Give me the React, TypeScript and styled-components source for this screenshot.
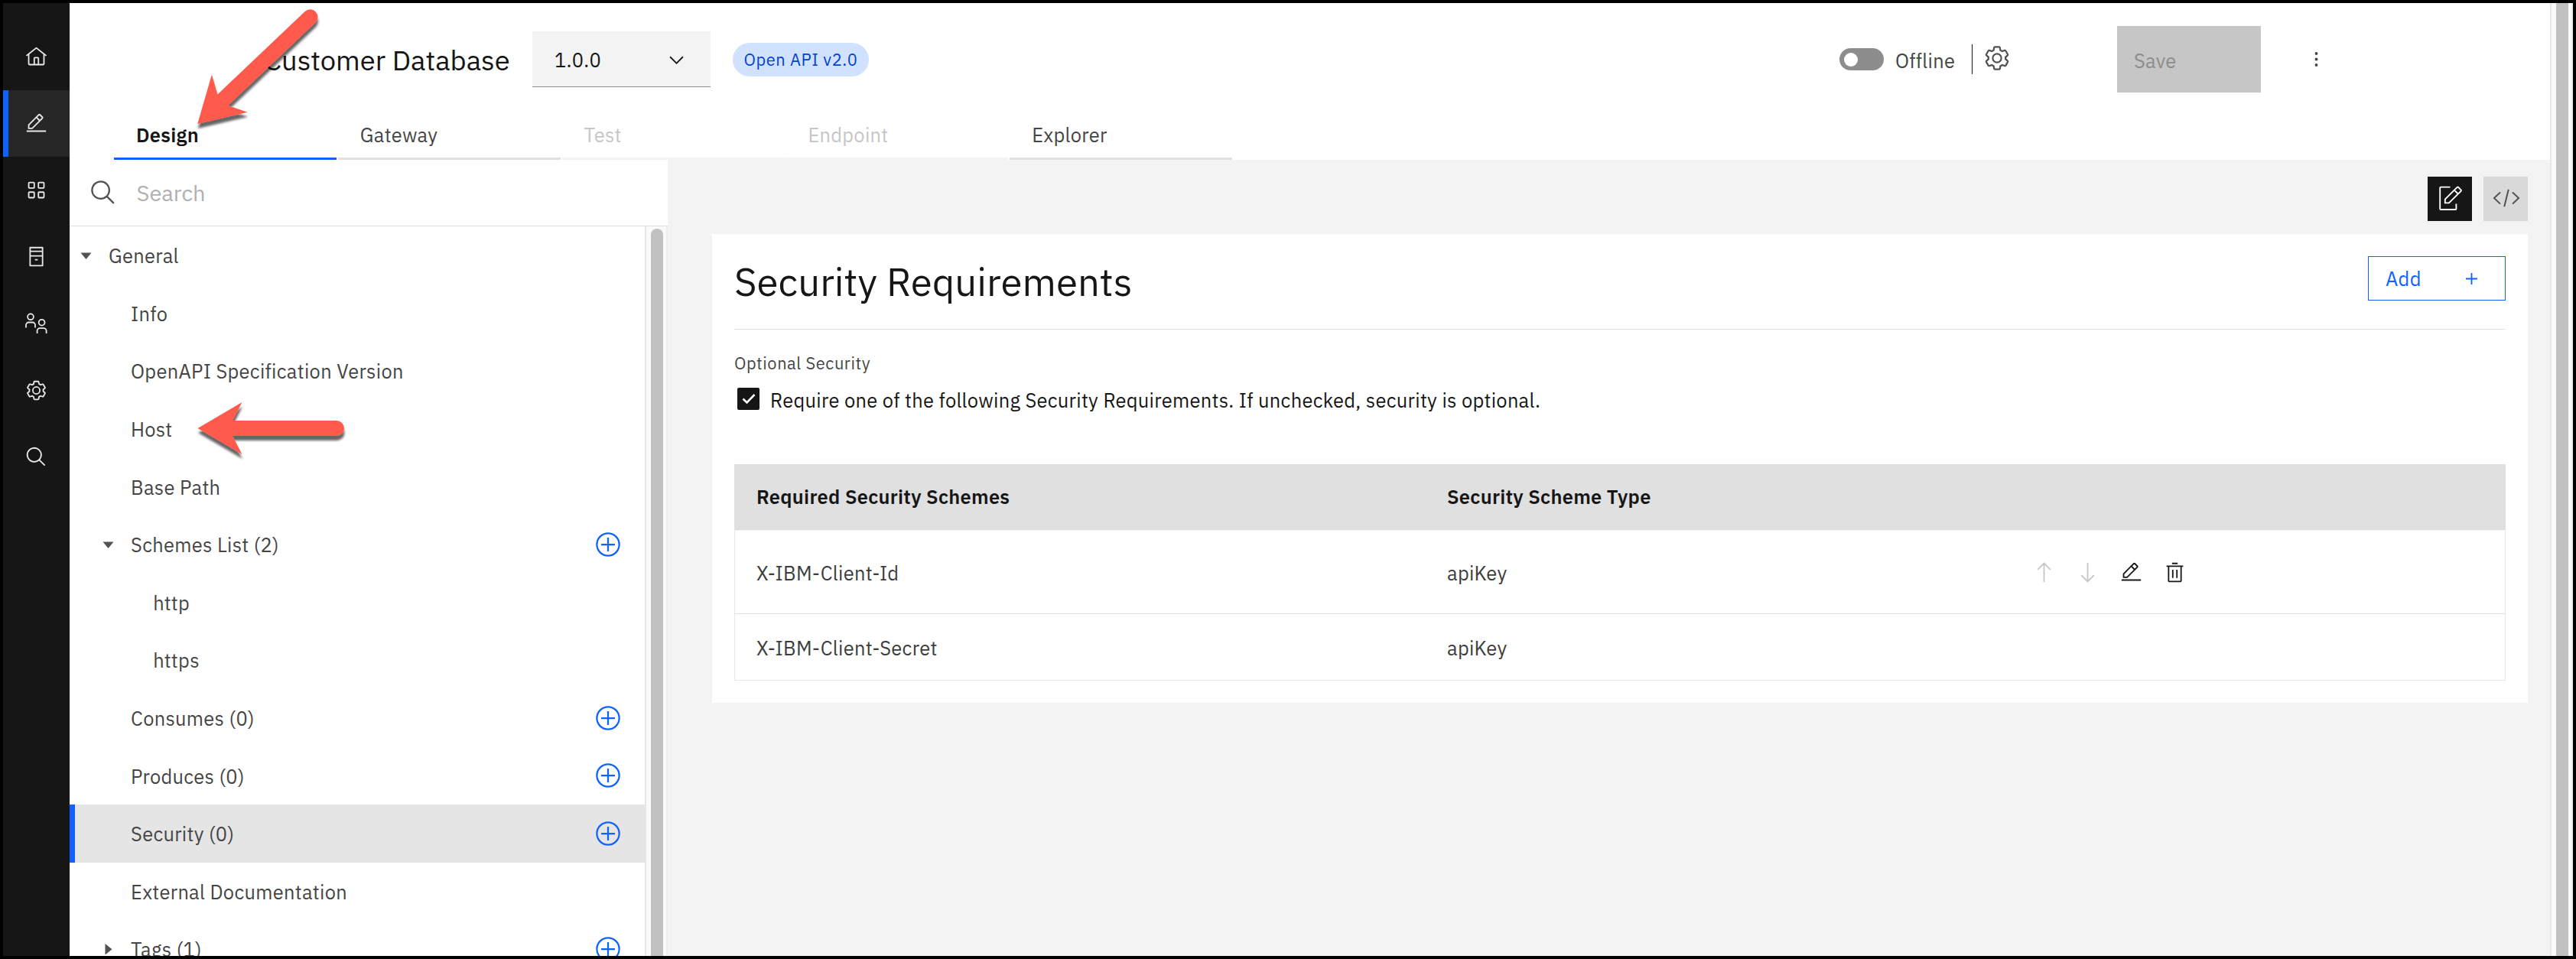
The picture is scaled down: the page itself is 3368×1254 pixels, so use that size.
import React from "react";
import styled, { createGlobalStyle, css } from "styled-components";

const color = {
  ink: "#161616",
  text: "#454545",
  muted: "#525252",
  disabled: "#c6c6c6",
  blue: "#0f62fe",
  line: "#e0e0e0",
  layer: "#f3f3f3",
  red: "#ff5a4c",
};

const GlobalStyle = createGlobalStyle`
  html, body { margin: 0; padding: 0; }
  *, *::before, *::after { box-sizing: border-box; }
  body {
    font-family: "IBM Plex Sans", "Noto Sans", sans-serif;
    font-size: 25.43px;
    letter-spacing: 0.3px;
    color: ${color.text};
  }
  button { font: inherit; letter-spacing: inherit; border: 0; padding: 0; margin: 0; background: none; color: inherit; }
  svg { display: block; flex: none; }
`;

/* ---------- shell ---------- */

const Frame = styled.div`
  position: relative;
  display: flex;
  width: 3368px;
  height: 1254px;
  border: 4px solid #000;
  background: #fff;
  overflow: hidden;
`;

const Rail = styled.nav`
  flex: none;
  display: flex;
  flex-direction: column;
  width: 87px;
  padding-top: 26.5px;
  background: ${color.ink};
`;

const RailItem = styled.button<{ $active?: boolean }>`
  display: flex;
  align-items: center;
  justify-content: center;
  height: 87.2px;
  color: #e8e8e8;
  ${(p) =>
    p.$active &&
    css`
      background: #262626;
      box-shadow: inset 7px 0 0 ${color.blue};
    `}
`;

const Main = styled.main`
  flex: 1;
  min-width: 0;
  display: flex;
  flex-direction: column;
`;

const ScrollTrack = styled.div`
  flex: none;
  display: flex;
  width: 30px;
  padding: 0 4px 0 6px;
  background: #fafafa;
  border-left: 2px solid #e6e6e6;
  border-right: 2px solid #ededed;
`;

const ScrollThumb = styled.div<{ $top?: boolean }>`
  flex: 1;
  background: #c1c1c1;
  margin-top: ${(p) => (p.$top ? 3 : 0)}px;
  border-radius: ${(p) => (p.$top ? "8px 8px 0 0" : 0)};
`;

/* ---------- header ---------- */

const Header = styled.header`
  flex: none;
  display: flex;
  flex-direction: column;
`;

const TitleBar = styled.div`
  display: flex;
  align-items: center;
  height: 147px;
  padding: 0 291px 0 254.5px;
`;

const Title = styled.h1`
  flex: none;
  width: 350.5px;
  margin: 0;
  padding-top: 2px;
  font-size: 36.33px;
  font-weight: 400;
  letter-spacing: 0;
  color: ${color.ink};
`;

const VersionSelect = styled.button`
  display: flex;
  align-items: center;
  justify-content: space-between;
  width: 233px;
  height: 73px;
  padding: 2px 30px 0 29px;
  background: ${color.layer};
  border-bottom: 1px solid #8d8d8d;
  color: ${color.ink};
`;

const Tag = styled.span`
  display: flex;
  align-items: center;
  justify-content: center;
  width: 178px;
  height: 44px;
  margin: 1px 0 0 29px;
  border-radius: 22px;
  background: #d0e2ff;
  color: #0043ce;
  font-size: 21.8px;
  letter-spacing: 0.58px;
`;

const HeaderActions = styled.div`
  display: flex;
  align-items: center;
  margin-left: auto;
`;

const Toggle = styled.span`
  width: 58px;
  height: 29px;
  padding: 5.5px;
  border-radius: 15px;
  background: #8d8d8d;
  &::before {
    content: "";
    display: block;
    width: 18px;
    height: 18px;
    border-radius: 50%;
    background: #fff;
  }
`;

const ToggleLabel = styled.span`
  width: 100px;
  margin-left: 15px;
  padding-top: 3px;
`;

const Divider = styled.span`
  width: 1px;
  height: 39px;
  background: ${color.ink};
`;

const GearSlot = styled.span`
  display: flex;
  margin: -3px 0 0 14px;
  color: ${color.muted};
`;

const SaveButton = styled.button`
  display: flex;
  align-items: center;
  width: 188px;
  height: 87px;
  margin: 0 58px 0 139px;
  padding: 3px 0 0 22px;
  background: ${color.disabled};
  color: #8d8d8d;
`;

const Tabs = styled.div`
  display: flex;
  gap: 1.8px;
  height: 58px;
  padding-left: 58px;
`;

type TabState = "active" | "normal" | "disabled";
const tabTone: Record<TabState, { line: string; text: string }> = {
  active: { line: color.blue, text: color.ink },
  normal: { line: color.line, text: color.text },
  disabled: { line: color.layer, text: color.disabled },
};

const Tab = styled.button<{ $state: TabState }>`
  display: flex;
  align-items: center;
  width: 291px;
  padding: 0 0 4px 29px;
  border-bottom: 3px solid ${(p) => tabTone[p.$state].line};
  color: ${(p) => tabTone[p.$state].text};
  font-weight: ${(p) => (p.$state === "active" ? 600 : 400)};
`;

/* ---------- side panel ---------- */

const Body = styled.div`
  flex: 1;
  min-height: 0;
  display: flex;
`;

const SidePanel = styled.aside`
  flex: none;
  display: flex;
  flex-direction: column;
  width: 782px;
`;

const SearchBar = styled.label`
  flex: none;
  display: flex;
  align-items: center;
  gap: 26px;
  height: 87px;
  padding-left: 25.5px;
  border-bottom: 1px solid ${color.line};
  font-size: 29.07px;
  letter-spacing: 0;
  color: #b0b0b0;
`;

const SearchGlyph = styled.span`
  color: ${color.muted};
`;

const TreeArea = styled.div`
  flex: 1;
  min-height: 0;
  display: flex;
`;

const Tree = styled.ul`
  flex: 1;
  margin: 0;
  padding: 0;
  list-style: none;
  overflow: hidden;
`;

const TreeRow = styled.li<{ $level: number; $selected?: boolean }>`
  display: flex;
  align-items: center;
  height: 75.6px;
  padding: 0 30px 0 ${(p) => 12 + p.$level * 29.07}px;
  ${(p) =>
    p.$selected &&
    css`
      background: #e5e5e5;
      box-shadow: inset 7px 0 0 ${color.blue};
    `}
`;

const TreeLabel = styled.span`
  padding-top: 2px;
`;

const CaretSlot = styled.span`
  flex: none;
  display: flex;
  align-items: center;
  width: 39px;
  color: ${color.muted};
`;

const AddSlot = styled.button`
  display: flex;
  margin-left: auto;
  color: ${color.blue};
`;

/* ---------- content ---------- */

const Content = styled.section`
  flex: 1;
  padding: 22px 29px 0 58px;
  background: ${color.layer};
`;

const ViewSwitch = styled.div`
  display: flex;
  justify-content: flex-end;
  gap: 15px;
  height: 75px;
`;

const ViewButton = styled.button<{ $on?: boolean }>`
  display: flex;
  align-items: center;
  justify-content: center;
  width: 58px;
  height: 58px;
  padding: 0 0 2px 1px;
  background: ${(p) => (p.$on ? color.ink : "#d9d9d9")};
  color: ${(p) => (p.$on ? "#fff" : color.muted)};
`;

const Card = styled.div`
  padding: 0 29px 29px;
  background: #fff;
`;

const CardHeader = styled.div`
  display: flex;
  align-items: flex-start;
  justify-content: space-between;
  height: 125px;
  padding-top: 29px;
  border-bottom: 1px solid ${color.line};
`;

const Heading = styled.h2`
  margin: 0;
  font-size: 50.87px;
  font-weight: 400;
  line-height: 66px;
  letter-spacing: 0.05px;
  color: ${color.ink};
`;

const AddButton = styled.button`
  display: flex;
  align-items: center;
  justify-content: space-between;
  width: 180px;
  height: 58px;
  padding: 0 36px 0 22px;
  border: 1px solid ${color.blue};
  color: ${color.blue};
`;

const FieldLabel = styled.div`
  margin-top: 29px;
  font-size: 21.8px;
  line-height: 30px;
  letter-spacing: 0.58px;
`;

const CheckRow = styled.label`
  display: flex;
  align-items: center;
  gap: 14px;
  height: 29px;
  margin: 17px 0 71px;
  padding-left: 4px;
  color: ${color.ink};
`;

const CheckBox = styled.span`
  display: flex;
  align-items: center;
  justify-content: center;
  width: 29px;
  height: 29px;
  border-radius: 2px;
  background: ${color.ink};
  color: #fff;
`;

const CheckText = styled.span`
  padding-top: 3px;
`;

const columns = css`
  display: grid;
  grid-template-columns: 903px 765px 1fr;
  align-items: center;
`;

const TableHead = styled.div`
  ${columns}
  height: 86px;
  padding-bottom: 1px;
  border: 1px solid ${color.line};
  background: ${color.line};
  color: ${color.ink};
  font-weight: 600;
`;

const TableBody = styled.div`
  border: 1px solid #e6e6e6;
  border-top-color: #f3f3f3;
`;

const TableRow = styled.div<{ $height: number }>`
  ${columns}
  height: ${(p) => p.$height}px;
  color: #3d3d3d;
  & + & {
    border-top: 1px solid ${color.line};
  }
`;

const Cell = styled.div`
  padding-left: 28px;
  ${TableRow} & {
    padding-top: 3px;
  }
`;

const RowActions = styled.div`
  display: flex;
  gap: 28px;
  padding: 1px 0 0 28.5px;
  color: ${color.ink};
`;

const RowAction = styled.button<{ $off?: boolean }>`
  display: flex;
  ${(p) => p.$off && `color: ${color.disabled};`}
`;

const Callout = styled.svg`
  position: absolute;
  inset: 0;
  pointer-events: none;
`;

/* ---------- icons ---------- */

const glyphs = {
  home: "M16.6123,2.2138a1.01,1.01,0,0,0-1.2427,0L1,13.4194l1.2427,1.5717L4,13.6209V26a2.0041,2.0041,0,0,0,2,2H26a2.0037,2.0037,0,0,0,2-2V13.63L29.7573,15,31,13.4282ZM18,26H14V18h4Zm2,0V18a2.0023,2.0023,0,0,0-2-2H14a2.002,2.002,0,0,0-2,2v8H6V12.0615l10-7.79,10,7.8005V26Z",
  edit: "M2 26H30V28H2zM25.4 9c.8-.8.8-2 0-2.8l-3.6-3.6c-.8-.8-2-.8-2.8 0l-15 15V24h6.4L25.4 9zM20.4 4L24 7.6l-3 3L17.4 7 20.4 4zM6 22v-3.6l10-10 3.6 3.6-10 10H6z",
  grid: "M12 4H6a2 2 0 0 0-2 2v6a2 2 0 0 0 2 2h6a2 2 0 0 0 2-2V6a2 2 0 0 0-2-2zm0 8H6V6h6zM26 4h-6a2 2 0 0 0-2 2v6a2 2 0 0 0 2 2h6a2 2 0 0 0 2-2V6a2 2 0 0 0-2-2zm0 8h-6V6h6zM12 18H6a2 2 0 0 0-2 2v6a2 2 0 0 0 2 2h6a2 2 0 0 0 2-2v-6a2 2 0 0 0-2-2zm0 8H6v-6h6zM26 18h-6a2 2 0 0 0-2 2v6a2 2 0 0 0 2 2h6a2 2 0 0 0 2-2v-6a2 2 0 0 0-2-2zm0 8h-6v-6h6z",
  catalog: "M7 2H25a1 1 0 0 1 1 1V29a1 1 0 0 1-1 1H7a1 1 0 0 1-1-1V3A1 1 0 0 1 7 2zM8 4V7.5H24V4zM8 9.5V14H24V9.5zM8 16V28H24V16zM14 19.5H18V21.5H14z",
  gear: "M27,16.76c0-.25,0-.5,0-.76s0-.51,0-.77l1.92-1.68A2,2,0,0,0,29.3,11L26.94,7a2,2,0,0,0-1.73-1,2,2,0,0,0-.64.1l-2.43.82a11.35,11.35,0,0,0-1.31-.75l-.51-2.52a2,2,0,0,0-2-1.61H13.64a2,2,0,0,0-2,1.61l-.51,2.52a11.48,11.48,0,0,0-1.32.75L7.43,6.06A2,2,0,0,0,6.79,6,2,2,0,0,0,5.06,7L2.7,11a2,2,0,0,0,.41,2.51L5,15.24c0,.25,0,.5,0,.76s0,.51,0,.77L3.11,18.45A2,2,0,0,0,2.7,21L5.06,25a2,2,0,0,0,1.73,1,2,2,0,0,0,.64-.1l2.43-.82a11.35,11.35,0,0,0,1.31.75l.51,2.52a2,2,0,0,0,2,1.61h4.72a2,2,0,0,0,2-1.61l.51-2.52a11.48,11.48,0,0,0,1.32-.75l2.42.82a2,2,0,0,0,.64.1,2,2,0,0,0,1.73-1L29.3,21a2,2,0,0,0-.41-2.51ZM25.21,24l-3.43-1.16a8.86,8.86,0,0,1-2.71,1.57L18.36,28H13.64l-.71-3.55a9.36,9.36,0,0,1-2.7-1.57L6.79,24,4.43,20l2.72-2.4a8.9,8.9,0,0,1,0-3.13L4.43,12,6.79,8l3.43,1.16a8.86,8.86,0,0,1,2.71-1.57L13.64,4h4.72l.71,3.55a9.36,9.36,0,0,1,2.7,1.57L25.21,8,27.57,12l-2.72,2.4a8.9,8.9,0,0,1,0,3.13L27.57,20ZM16,22a6,6,0,1,1,6-6A5.94,5.94,0,0,1,16,22Zm0-10a3.91,3.91,0,0,0-4,4,3.91,3.91,0,0,0,4,4,3.91,3.91,0,0,0,4-4A3.91,3.91,0,0,0,16,12Z",
  search: "M29,27.5859l-7.5521-7.5521a11.0177,11.0177,0,1,0-1.4141,1.4141L27.5859,29ZM4,13a9,9,0,1,1,9,9A9.01,9.01,0,0,1,4,13Z",
  addAlt: "M16,4A12,12,0,1,1,4,16,12,12,0,0,1,16,4m0-2A14,14,0,1,0,30,16,14,14,0,0,0,16,2ZM24 15H17V8H15v7H8v2h7v7h2V17h7z",
  trash: "M12 12H14V24H12zM18 12H20V24H18zM4 6V8H6V28a2 2 0 0 0 2 2H24a2 2 0 0 0 2-2V8h2V6zM8 28V8H24V28zM12 2H20V4H12z",
  chevron: "M16 22 6 12 7.4 10.6 16 19.2 24.6 10.6 26 12z",
};

const Icon = ({ name, size = 29 }: { name: keyof typeof glyphs; size?: number }) => (
  <svg width={size} height={size} viewBox="0 0 32 32" fill="currentColor" fillRule="evenodd">
    <path d={glyphs[name]} />
  </svg>
);

const PeopleIcon = () => (
  <svg width="29" height="29" viewBox="0 0 29 29" fill="none" stroke="currentColor" strokeWidth="1.8">
    <circle cx="7" cy="6.3" r="3.9" />
    <path d="M1 20.5V17a3.5 3.5 0 0 1 3.5-3.5h5A3.5 3.5 0 0 1 13 17v3.5" />
    <circle cx="21.6" cy="13.7" r="3.9" />
    <path d="M15.6 28V24.6a3.5 3.5 0 0 1 3.5-3.5h5a3.5 3.5 0 0 1 3.5 3.5V28" />
  </svg>
);

const ArrowIcon = ({ down }: { down?: boolean }) => (
  <svg width="29" height="29" viewBox="0 0 29 29" fill="none" stroke="currentColor" strokeWidth="1.8">
    <path d={down ? "M14.5 2V26.2M6.2 18.2l8.3 8.3 8.3-8.3" : "M14.5 27V2.8M6.2 10.8l8.3-8.3 8.3 8.3"} />
  </svg>
);

const FormIcon = () => (
  <svg width="32" height="33" viewBox="0 0 32 33" fill="none" stroke="currentColor" strokeWidth="1.9">
    <path d="M15.5 1.6H3.2a1 1 0 0 0-1 1V30a1 1 0 0 0 1 1H22.4a1 1 0 0 0 1-1V23.6" />
    <path d="M8.8 22.4V17.6L24.6 1.8a1 1 0 0 1 1.4 0l3.6 3.6a1 1 0 0 1 0 1.4L13.9 22.4zM20.9 5.6l4.9 4.9" />
  </svg>
);

const CodeIcon = () => (
  <svg width="36" height="24" viewBox="0 0 36 24" fill="none" stroke="currentColor" strokeWidth="2">
    <path d="M10 4.4 2 12l8 7.6M20.8.8 15.2 23.2M26 4.4l8 7.6-8 7.6" />
  </svg>
);

const PlusIcon = () => (
  <svg width="15" height="15" viewBox="0 0 15 15" stroke="currentColor" strokeWidth="1.8">
    <path d="M7.5 0V15M0 7.5H15" />
  </svg>
);

const CheckIcon = () => (
  <svg width="18" height="15" viewBox="0 0 18 15" fill="none" stroke="currentColor" strokeWidth="2.6">
    <path d="M1.5 7.5l5 5L16.5 2" />
  </svg>
);

const OverflowIcon = () => (
  <svg width="29" height="29" viewBox="0 0 29 29" fill="currentColor">
    <circle cx="14.5" cy="7" r="1.9" />
    <circle cx="14.5" cy="14.5" r="1.9" />
    <circle cx="14.5" cy="22" r="1.9" />
  </svg>
);

const Caret = ({ open }: { open: boolean }) => (
  <svg width="18" height="18" viewBox="0 0 18 18" fill="currentColor">
    <path d={open ? "M2.5 5.5H16.5L9.5 14z" : "M5.5 2V16.5L14.5 9.2z"} />
  </svg>
);

/* Arrow drawn with its tip at the origin, pointing left. */
const Pointer = ({ x, y, length, angle = 0 }: { x: number; y: number; length: number; angle?: number }) => (
  <g filter="url(#drop)">
    <path
      transform={`translate(${x} ${y}) rotate(${angle})`}
      fill={color.red}
      d={`M0 0 58-34 45.5-10H${length - 10}a10 10 0 0 1 0 20H45.5L58 34z`}
    />
  </g>
);

/* ---------- data ---------- */

const tabs: { label: string; state: TabState }[] = [
  { label: "Design", state: "active" },
  { label: "Gateway", state: "normal" },
  { label: "Test", state: "disabled" },
  { label: "Endpoint", state: "disabled" },
  { label: "Explorer", state: "normal" },
];

type Node = { label: string; level: number; open?: boolean; add?: boolean; selected?: boolean };
const tree: Node[] = [
  { label: "General", level: 0, open: true },
  { label: "Info", level: 1 },
  { label: "OpenAPI Specification Version", level: 1 },
  { label: "Host", level: 1 },
  { label: "Base Path", level: 1 },
  { label: "Schemes List (2)", level: 1, open: true, add: true },
  { label: "http", level: 2 },
  { label: "https", level: 2 },
  { label: "Consumes (0)", level: 1, add: true },
  { label: "Produces (0)", level: 1, add: true },
  { label: "Security (0)", level: 1, add: true, selected: true },
  { label: "External Documentation", level: 1 },
  { label: "Tags (1)", level: 1, open: false, add: true },
];

export default function App() {
  return (
    <>
      <GlobalStyle />
      <Frame>
        <Rail>
          <RailItem><Icon name="home" /></RailItem>
          <RailItem $active><Icon name="edit" /></RailItem>
          <RailItem><Icon name="grid" /></RailItem>
          <RailItem><Icon name="catalog" /></RailItem>
          <RailItem><PeopleIcon /></RailItem>
          <RailItem><Icon name="gear" /></RailItem>
          <RailItem><Icon name="search" /></RailItem>
        </Rail>

        <Main>
          <Header>
            <TitleBar>
              <Title>Customer Database</Title>
              <VersionSelect>
                1.0.0
                <Icon name="chevron" />
              </VersionSelect>
              <Tag>Open API v2.0</Tag>
              <HeaderActions>
                <Toggle />
                <ToggleLabel>Offline</ToggleLabel>
                <Divider />
                <GearSlot><Icon name="gear" size={36} /></GearSlot>
                <SaveButton>Save</SaveButton>
                <OverflowIcon />
              </HeaderActions>
            </TitleBar>
            <Tabs>
              {tabs.map((t) => (
                <Tab key={t.label} $state={t.state}>{t.label}</Tab>
              ))}
            </Tabs>
          </Header>

          <Body>
            <SidePanel>
              <SearchBar>
                <SearchGlyph><Icon name="search" size={36} /></SearchGlyph>
                Search
              </SearchBar>
              <TreeArea>
                <Tree>
                  {tree.map((n) => (
                    <TreeRow key={n.label} $level={n.level} $selected={n.selected}>
                      <CaretSlot>{n.open !== undefined && <Caret open={n.open} />}</CaretSlot>
                      <TreeLabel>{n.label}</TreeLabel>
                      {n.add && <AddSlot><Icon name="addAlt" size={36} /></AddSlot>}
                    </TreeRow>
                  ))}
                </Tree>
                <ScrollTrack><ScrollThumb $top /></ScrollTrack>
              </TreeArea>
            </SidePanel>

            <Content>
              <ViewSwitch>
                <ViewButton $on><FormIcon /></ViewButton>
                <ViewButton><CodeIcon /></ViewButton>
              </ViewSwitch>
              <Card>
                <CardHeader>
                  <Heading>Security Requirements</Heading>
                  <AddButton>Add<PlusIcon /></AddButton>
                </CardHeader>
                <FieldLabel>Optional Security</FieldLabel>
                <CheckRow>
                  <CheckBox><CheckIcon /></CheckBox>
                  <CheckText>
                    Require one of the following Security Requirements. If unchecked, security is optional.
                  </CheckText>
                </CheckRow>
                <TableHead>
                  <Cell>Required Security Schemes</Cell>
                  <Cell>Security Scheme Type</Cell>
                </TableHead>
                <TableBody>
                  <TableRow $height={108}>
                    <Cell>X-IBM-Client-Id</Cell>
                    <Cell>apiKey</Cell>
                    <RowActions>
                      <RowAction $off><ArrowIcon /></RowAction>
                      <RowAction $off><ArrowIcon down /></RowAction>
                      <RowAction><Icon name="edit" /></RowAction>
                      <RowAction><Icon name="trash" /></RowAction>
                    </RowActions>
                  </TableRow>
                  <TableRow $height={87}>
                    <Cell>X-IBM-Client-Secret</Cell>
                    <Cell>apiKey</Cell>
                  </TableRow>
                </TableBody>
              </Card>
            </Content>
          </Body>
        </Main>

        <ScrollTrack><ScrollThumb /></ScrollTrack>

        <Callout width="3360" height="1246" viewBox="4 4 3360 1246">
          <defs>
            <filter id="drop" x="-20%" y="-40%" width="140%" height="190%">
              <feDropShadow dx="0.5" dy="6" stdDeviation="1.8" floodColor="#000" floodOpacity="0.6" />
            </filter>
          </defs>
          <Pointer x={258.3} y={162} length={213} angle={-43.5} />
          <Pointer x={258.5} y={560} length={191.5} />
        </Callout>
      </Frame>
    </>
  );
}
